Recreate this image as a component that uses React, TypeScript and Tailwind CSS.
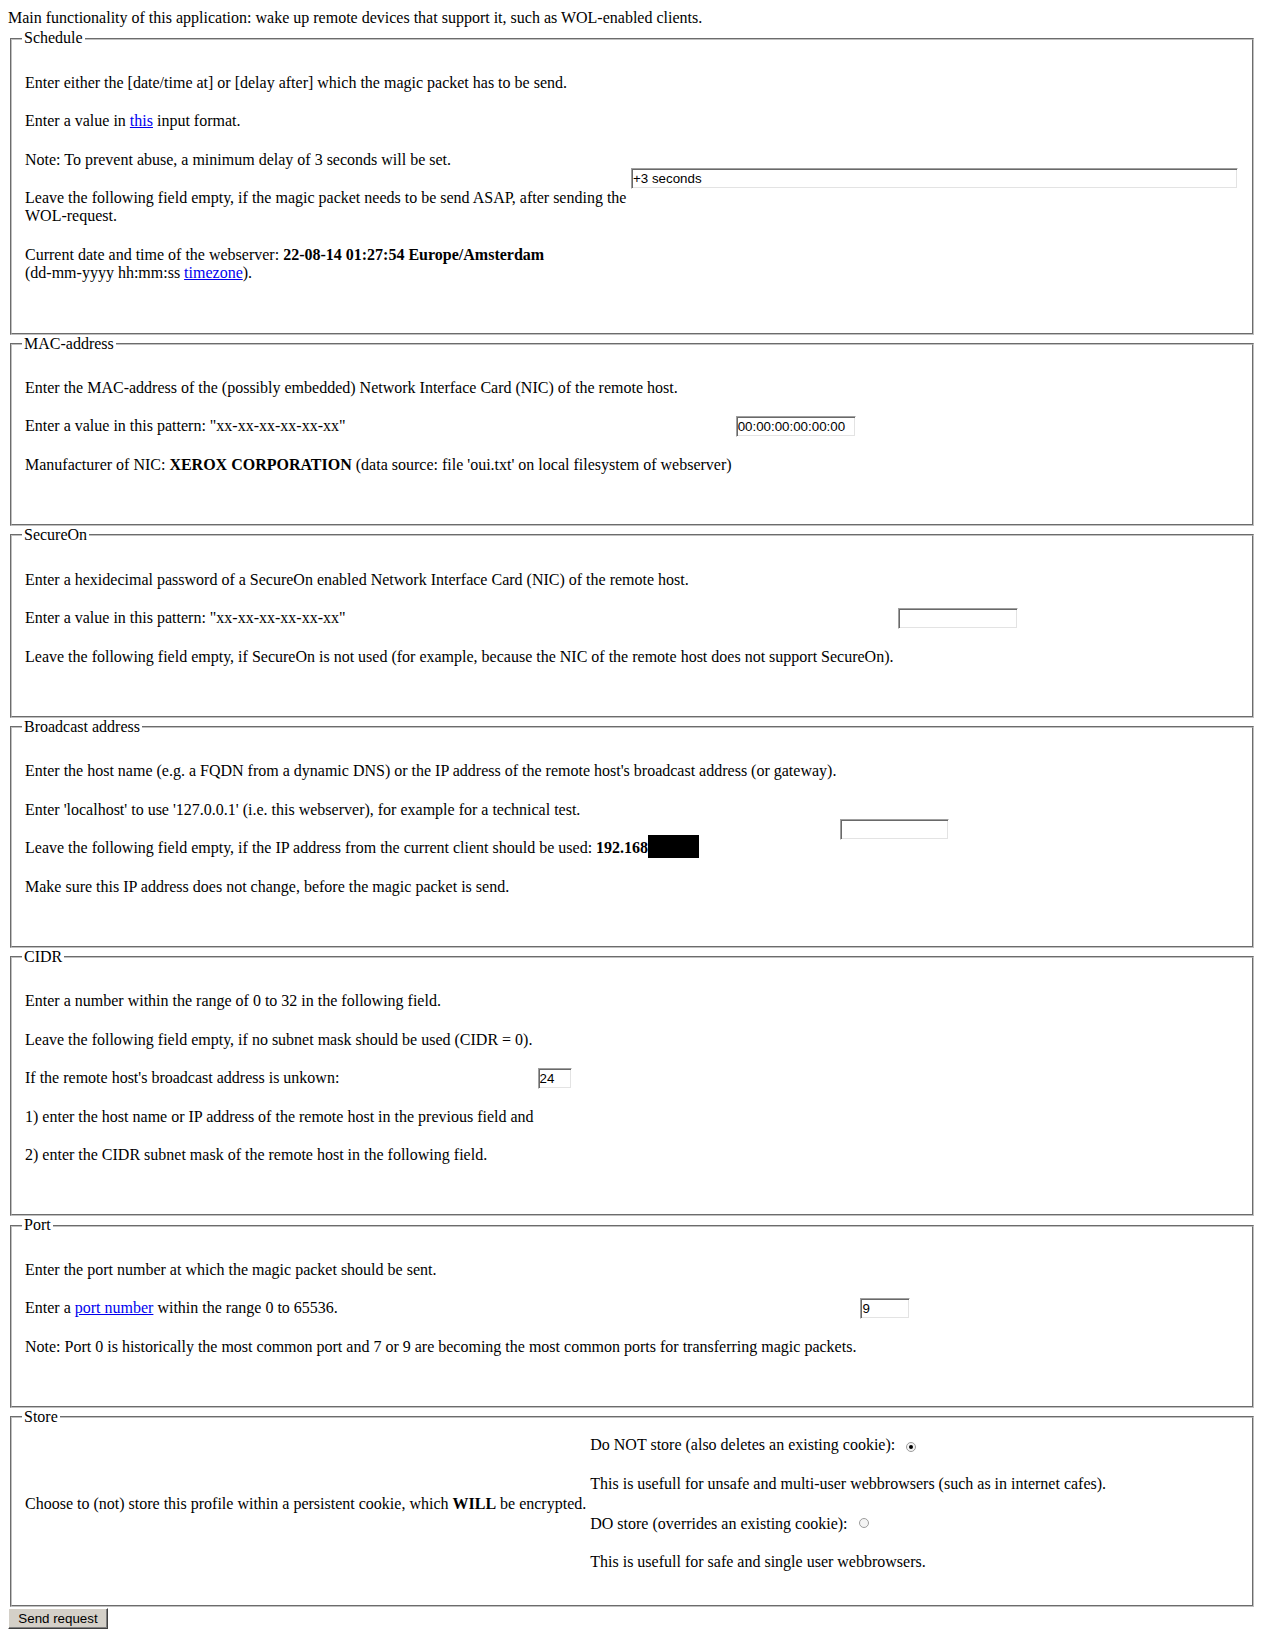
import type { ReactNode } from "react";

function Section({
  title,
  children,
  right,
  leftClass = "flex-none",
  pad = "pt-[26px] pb-[50px]",
}: {
  title: string;
  children: ReactNode;
  right: ReactNode;
  leftClass?: string;
  pad?: string;
}) {
  return (
    <fieldset
      className={`mx-[2px] border-2 border-[#c0c0c0] [border-style:groove] pl-[10px] pr-[11px] ${pad}`}
    >
      <legend className="px-[2px]">{title}</legend>
      <div className="flex items-center gap-[4px] pl-[3px] pr-[3px]">
        <div className={`flex flex-col gap-[20px] ${leftClass}`}>{children}</div>
        {right}
      </div>
    </fieldset>
  );
}

function TextInput({ value = "", className = "" }: { value?: string; className?: string }) {
  return (
    <input
      type="text"
      defaultValue={value}
      className={`h-[21px] border border-t-[#a0a0a0] border-l-[#a0a0a0] border-b-white border-r-white bg-white px-[1px] font-['Liberation_Sans',Arial,sans-serif] text-[13.33px] text-black shadow-[inset_1px_1px_0_#696969,inset_-1px_-1px_0_#e3e3e3] outline-none ${className}`}
    />
  );
}

function Radio({ checked }: { checked?: boolean }) {
  return (
    <span className="ml-[7px] inline-flex h-[10px] w-[10px] items-center justify-center rounded-full border border-[#9c9c9c] bg-[#f4f4f4] align-[1px]">
      {checked ? <span className="h-[4px] w-[4px] rounded-full bg-black" /> : null}
    </span>
  );
}

function A({ children }: { children: ReactNode }) {
  return <a className="text-[#0000ee] underline">{children}</a>;
}

function App() {
  return (
    <div className="min-h-screen bg-white px-[8px] pt-[8px] pb-[8px] font-['Liberation_Serif','Times_New_Roman',serif] text-[16px] leading-[18.4px] text-black">
      <p className="mb-[2px] pt-[1px]">
        Main functionality of this application: wake up remote devices that support it, such as WOL-enabled clients.
      </p>

      <Section
        title="Schedule"
        leftClass="w-[602px] flex-none"
        right={<TextInput value="+3 seconds" className="min-w-0 flex-1" />}
      >
        <p>Enter either the [date/time at] or [delay after] which the magic packet has to be send.</p>
        <p>
          Enter a value in <A>this</A> input format.
        </p>
        <p>Note: To prevent abuse, a minimum delay of 3 seconds will be set.</p>
        <p>Leave the following field empty, if the magic packet needs to be send ASAP, after sending the WOL-request.</p>
        <p>
          Current date and time of the webserver: <b>22-08-14 01:27:54 Europe/Amsterdam</b>
          <br />
          (dd-mm-yyyy hh:mm:ss <A>timezone</A>).
        </p>
      </Section>

      <Section title="MAC-address" right={<TextInput value="00:00:00:00:00:00" className="w-[120px]" />}>
        <p>Enter the MAC-address of the (possibly embedded) Network Interface Card (NIC) of the remote host.</p>
        <p>Enter a value in this pattern: "xx-xx-xx-xx-xx-xx"</p>
        <p>
          Manufacturer of NIC: <b>XEROX CORPORATION</b> (data source: file 'oui.txt' on local filesystem of webserver)
        </p>
      </Section>

      <Section title="SecureOn" right={<TextInput className="w-[120px]" />}>
        <p>Enter a hexidecimal password of a SecureOn enabled Network Interface Card (NIC) of the remote host.</p>
        <p>Enter a value in this pattern: "xx-xx-xx-xx-xx-xx"</p>
        <p>
          Leave the following field empty, if SecureOn is not used (for example, because the NIC of the remote host does not support SecureOn).
        </p>
      </Section>

      <Section title="Broadcast address" right={<TextInput className="w-[109px]" />}>
        <p>
          Enter the host name (e.g. a FQDN from a dynamic DNS) or the IP address of the remote host's broadcast address (or gateway).
        </p>
        <p>Enter 'localhost' to use '127.0.0.1' (i.e. this webserver), for example for a technical test.</p>
        <p>
          Leave the following field empty, if the IP address from the current client should be used: <b>192.168</b>
          <span className="-mt-[5px] inline-block h-[23px] w-[51px] bg-black align-bottom" />
        </p>
        <p>Make sure this IP address does not change, before the magic packet is send.</p>
      </Section>

      <Section title="CIDR" right={<TextInput value="24" className="w-[34px]" />}>
        <p>Enter a number within the range of 0 to 32 in the following field.</p>
        <p>Leave the following field empty, if no subnet mask should be used (CIDR = 0).</p>
        <p>If the remote host's broadcast address is unkown:</p>
        <p>1) enter the host name or IP address of the remote host in the previous field and</p>
        <p>2) enter the CIDR subnet mask of the remote host in the following field.</p>
      </Section>

      <Section title="Port" right={<TextInput value="9" className="w-[50px]" />}>
        <p>Enter the port number at which the magic packet should be sent.</p>
        <p>
          Enter a <A>port number</A> within the range 0 to 65536.
        </p>
        <p>Note: Port 0 is historically the most common port and 7 or 9 are becoming the most common ports for transferring magic packets.</p>
      </Section>

      <fieldset className="mx-[2px] border-2 border-[#c0c0c0] [border-style:groove] pl-[10px] pr-[11px] pt-[10px] pb-[33.4px]">
        <legend className="px-[2px]">Store</legend>
        <div className="flex items-center gap-[4px] pl-[3px] pr-[3px]">
          <p className="flex-none">
            Choose to (not) store this profile within a persistent cookie, which <b>WILL</b> be encrypted.
          </p>
          <div className="flex flex-col">
            <p>
              Do NOT store (also deletes an existing cookie): <Radio checked />
            </p>
            <p className="mt-[20px]">This is usefull for unsafe and multi-user webbrowsers (such as in internet cafes).</p>
            <p className="mt-[21.7px]">
              DO store (overrides an existing cookie): <Radio />
            </p>
            <p className="mt-[20px]">This is usefull for safe and single user webbrowsers.</p>
          </div>
        </div>
      </fieldset>

      <button
        type="button"
        className="mt-[1px] block h-[21px] w-[100px] border border-t-white border-l-white border-b-[#404040] border-r-[#404040] bg-[#d4d0c8] font-['Liberation_Sans',Arial,sans-serif] text-[13.33px] leading-none text-black shadow-[inset_-1px_-1px_0_#808080]"
      >
        Send request
      </button>
    </div>
  );
}

export default App;
